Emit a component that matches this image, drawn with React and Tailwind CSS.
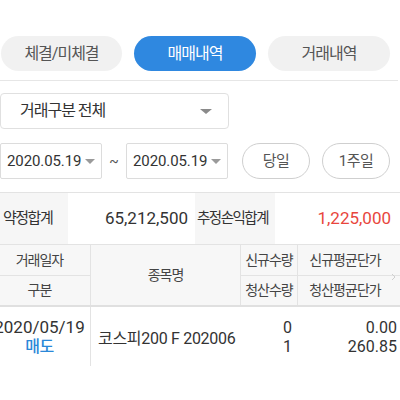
import React from "react";

const FONT = { fontFamily: 'Roboto, "Noto Sans CJK KR", sans-serif' };

function Caret({ w = 12, h = 6, color = "#8c8c8c" }) {
  return (
    <svg width={w} height={h} viewBox={`0 0 ${w} ${h}`}>
      <polygon points={`0,0 ${w},0 ${w / 2},${h}`} fill={color} />
    </svg>
  );
}

export default function App() {
  return (
    <div className="w-[400px] h-[400px] bg-white overflow-hidden text-[#333]" style={FONT}>
      {/* Tabs */}
      <div className="pt-[36px] flex gap-[12px] pl-[1px]">
        <div className="w-[121px] h-[35px] rounded-full bg-[#f1f1f1] flex items-center justify-center text-[16px] tracking-[-1px] text-[#555]">
          체결/미체결
        </div>
        <div className="w-[122px] h-[35px] rounded-full bg-[#2f88e0] flex items-center justify-center text-[16px] tracking-[-1px] text-white">
          매매내역
        </div>
        <div className="w-[122px] h-[35px] rounded-full bg-[#f1f1f1] flex items-center justify-center text-[16px] tracking-[-1px] text-[#555]">
          거래내역
        </div>
      </div>
      <div className="mt-[9px] w-[398px] border-t border-[#e6e6e6]" />

      {/* Select */}
      <div className="mt-[12px] w-[229px] h-[36px] border border-[#e0e0e0] rounded-[4px] flex items-center justify-between pl-[19px] pr-[16px]">
        <span className="text-[16px] tracking-[-1px] text-[#333]">거래구분 전체</span>
        <Caret w={12} h={5} color="#8a8a8a" />
      </div>

      {/* Date row */}
      <div className="mt-[14px] flex items-center h-[36px]">
        <div className="w-[102px] h-[36px] border border-[#dcdcdc] rounded-[2px] flex items-center pl-[6px] gap-[4px]">
          <span className="text-[15px] tracking-[-0.1px] text-[#333]">2020.05.19</span>
          <Caret w={10} h={5} color="#9a9a9a" />
        </div>
        <div className="w-[24px] text-center text-[14px] text-[#555]">~</div>
        <div className="w-[102px] h-[36px] border border-[#dcdcdc] rounded-[2px] flex items-center pl-[6px] gap-[4px]">
          <span className="text-[15px] tracking-[-0.1px] text-[#333]">2020.05.19</span>
          <Caret w={10} h={5} color="#9a9a9a" />
        </div>
        <div className="ml-[14px] w-[68px] h-[36px] border border-[#cfcfcf] rounded-full flex items-center justify-center text-[15px] text-[#555] tracking-[-0.5px]">
          당일
        </div>
        <div className="ml-[12px] w-[68px] h-[36px] border border-[#cfcfcf] rounded-full flex items-center justify-center text-[15px] text-[#555] tracking-[-0.5px]">
          1주일
        </div>
      </div>

      {/* Summary */}
      <div className="mt-[13px] border-t border-[#e3e3e3] flex h-[52px]">
        <div className="w-[68px] bg-[#f6f6f6] flex items-center pl-[3px] text-[15px] tracking-[-1.5px] text-[#333] whitespace-nowrap">약정합계</div>
        <div className="w-[127px] flex items-center justify-end pr-[7px] text-[#333] text-[17px]">65,212,500</div>
        <div className="w-[80px] bg-[#f6f6f6] flex items-center pl-[2px] text-[14.5px] tracking-[-1.5px] text-[#333] whitespace-nowrap">추정손익합계</div>
        <div className="flex-1 flex items-center justify-end pr-[9px] text-[#e8463d] text-[17px]">1,225,000</div>
      </div>

      {/* Table */}
      <div className="relative overflow-hidden">
        <div className="ml-[-11px] w-[413px]">
          <div className="flex border-t border-[#e3e3e3] border-b-2 border-b-[#e0e0e0] bg-[#f7f7f7] text-[14px] tracking-[-1px] text-[#444]">
            <div className="w-[102px] flex flex-col border-r border-[#e3e3e3]">
              <div className="h-[31px] flex items-center justify-center border-b border-[#e3e3e3]">거래일자</div>
              <div className="h-[29px] flex items-center justify-center">구분</div>
            </div>
            <div className="w-[150px] flex items-center justify-center border-r border-[#e3e3e3]">종목명</div>
            <div className="w-[57px] flex flex-col border-r border-[#e3e3e3]">
              <div className="h-[31px] flex items-center justify-center border-b border-[#e3e3e3]">신규수량</div>
              <div className="h-[29px] flex items-center justify-center">청산수량</div>
            </div>
            <div className="flex-1 flex flex-col">
              <div className="h-[31px] flex items-center justify-center border-b border-[#e3e3e3] pr-[10px]">신규평균단가</div>
              <div className="h-[29px] flex items-center justify-center pr-[10px]">청산평균단가</div>
            </div>
          </div>
          <div className="flex h-[59px]">
            <div className="w-[102px] flex flex-col items-center justify-center border-r border-[#e3e3e3] leading-[19px]">
              <span className="text-[17px] text-[#333] whitespace-nowrap">2020/05/19</span>
              <span className="text-[16px] text-[#2a88d8] font-medium tracking-[-0.5px]">매도</span>
            </div>
            <div className="w-[150px] flex items-center pl-[7px] text-[16px] text-[#333] tracking-[-0.3px] whitespace-nowrap pt-[4px]">
              코스피200 F 202006
            </div>
            <div className="w-[57px] flex flex-col items-end justify-center pr-[6px] text-[16px] text-[#333] leading-[19px]">
              <span>0</span>
              <span>1</span>
            </div>
            <div className="flex-1 flex flex-col items-end justify-center pr-[5px] text-[16px] text-[#333] leading-[19px]">
              <span>0.00</span>
              <span>260.85</span>
            </div>
          </div>
        </div>
        <svg className="absolute left-[391px] top-[29px]" width="6" height="8" viewBox="0 0 6 8">
          <polyline points="1,1 4,4 1,7" fill="none" stroke="#cfcfcf" strokeWidth="1" />
        </svg>
      </div>
    </div>
  );
}
